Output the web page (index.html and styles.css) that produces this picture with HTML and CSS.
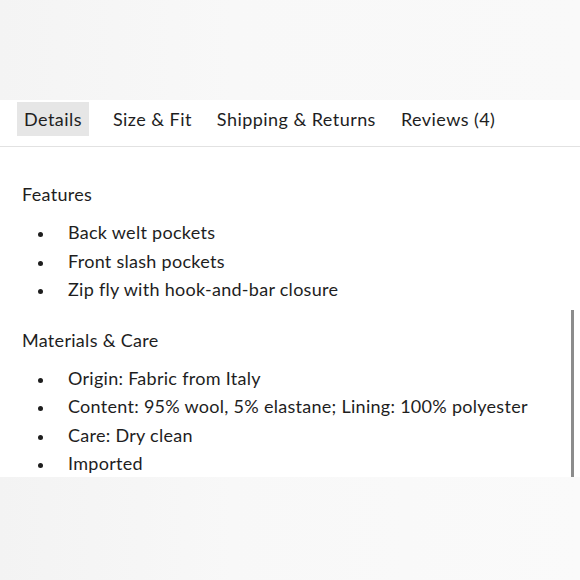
FILE: index.html
```html
<!DOCTYPE html>
<html>
<head>
    <meta charset="UTF-8" />
    <meta name="viewport" content="width=device-width, initial-scale=1.0" />
    <title>Details</title>
    <link rel="stylesheet" href="styles.css">
</head>
<body>
    <div class="top-band"></div>

    <div class="panel">
        <div class="tabs">
            <span class="tab active">Details</span>
            <span class="tab">Size &amp; Fit</span>
            <span class="tab">Shipping &amp; Returns</span>
            <span class="tab">Reviews (4)</span>
        </div>

        <div class="content">
            <h3>Features</h3>
            <ul>
                <li>Back welt pockets</li>
                <li>Front slash pockets</li>
                <li>Zip fly with hook-and-bar closure</li>
            </ul>

            <h3>Materials &amp; Care</h3>
            <ul>
                <li>Origin: Fabric from Italy</li>
                <li>Content: 95% wool, 5% elastane; Lining: 100% polyester</li>
                <li>Care: Dry clean</li>
                <li>Imported</li>
            </ul>
        </div>

        <div class="scrollbar"></div>
    </div>

    <div class="bottom-band"></div>
</body>
</html>
```

FILE: styles.css
```css
* {
    margin: 0;
    padding: 0;
    box-sizing: border-box;
    font-family: Lato, "Liberation Sans", sans-serif;
}

body {
    width: 580px;
    height: 580px;
    overflow: hidden;
    background: #fff;
    color: #1e1e1e;
}

.top-band {
    height: 100px;
    background: linear-gradient(90deg, #f4f4f4, #f8f8f8 40%, #f9f9f9);
}

.panel {
    position: relative;
    height: 377px;
    background: #fff;
}

.tabs {
    display: flex;
    align-items: flex-start;
    gap: 11px;
    padding: 2px 0 0 17px;
    height: 47px;
    border-bottom: 1px solid #e2e2e2;
}

.tab {
    font-size: 18px;
    line-height: 34px;
    padding: 0 7px;
    letter-spacing: 0.45px;
}

.tab.active {
    background: #e6e6e6;
    margin-right: 6px;
}

.content {
    padding: 35px 0 0 22px;
}

.content h3 {
    font-size: 18px;
    font-weight: 400;
    line-height: 24px;
    letter-spacing: 0.3px;
}

.content ul {
    list-style: none;
    padding: 12px 0 24px 0;
}

.content li {
    position: relative;
    font-size: 18px;
    line-height: 28.5px;
    padding-left: 46px;
    letter-spacing: 0.28px;
}

.content li::before {
    content: "";
    position: absolute;
    left: 16px;
    top: 14px;
    width: 5px;
    height: 5px;
    border-radius: 50%;
    background: #1e1e1e;
}

.scrollbar {
    position: absolute;
    right: 6px;
    top: 210px;
    width: 3px;
    height: 167px;
    background: #8c8c8c;
}

.bottom-band {
    height: 103px;
    background: linear-gradient(90deg, #f3f3f3, #f8f8f8 40%, #fafafa);
}
```
